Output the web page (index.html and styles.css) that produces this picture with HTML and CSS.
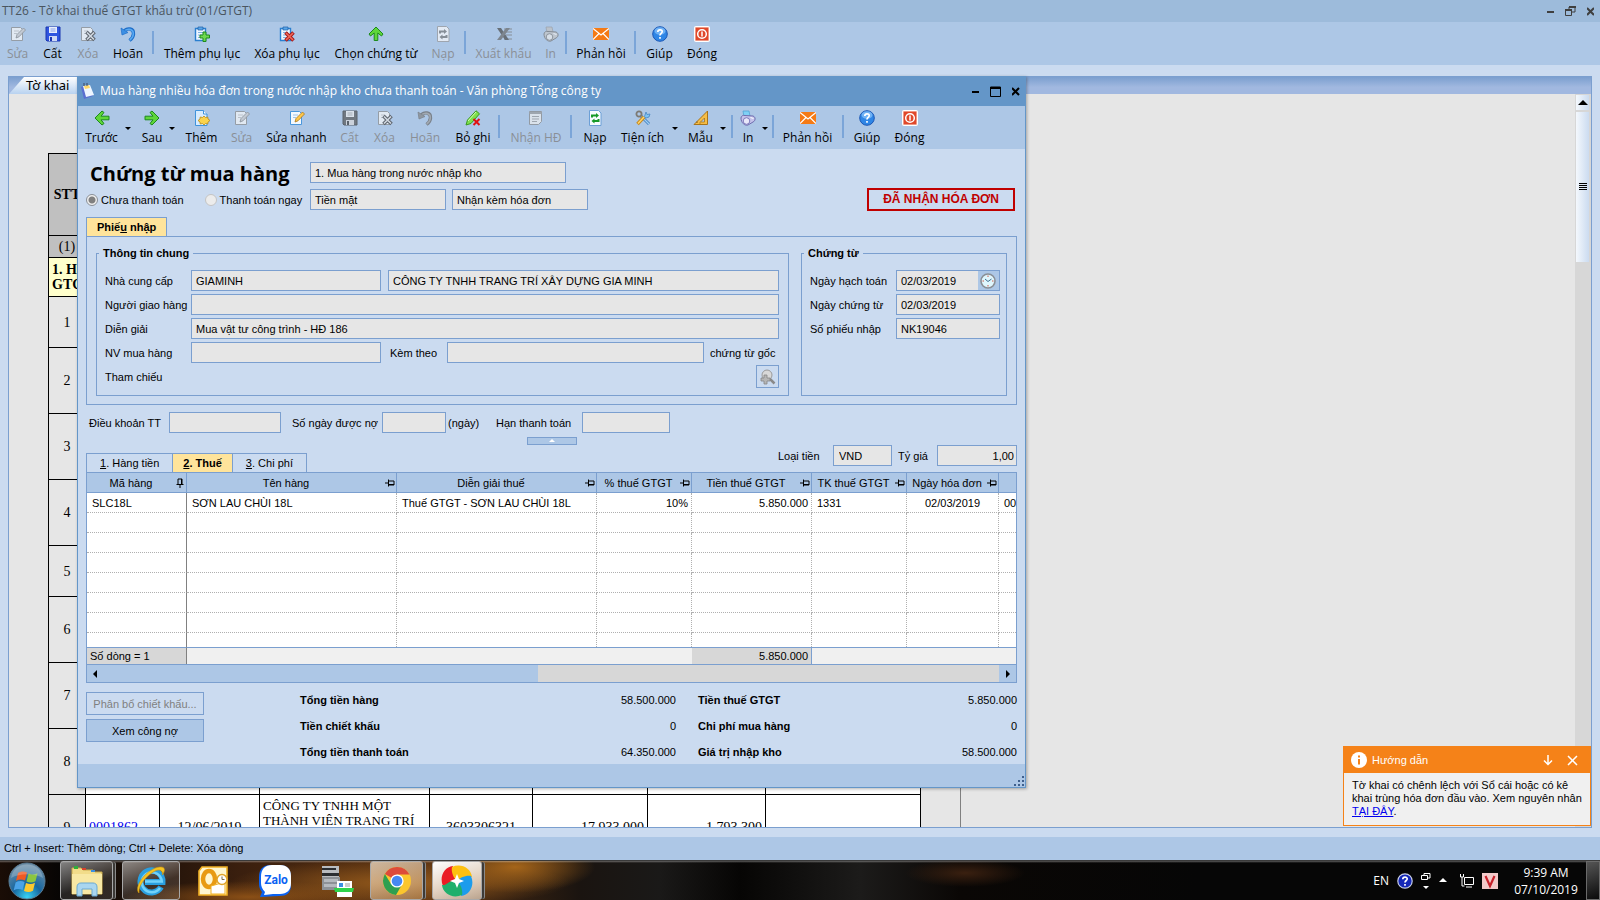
FILE: index.html
```html
<!DOCTYPE html>
<html lang="vi">
<head>
    <meta charset="UTF-8">
    <meta name="viewport" content="width=device-width, initial-scale=1.0">
    <title>TT26 - Tờ khai thuế GTGT khấu trừ (01/GTGT)</title>
    <link rel="stylesheet" href="styles.css">
</head>
<body>
    <!-- Shared icons -->
    <svg class="icon-defs" aria-hidden="true">
        <symbol id="i-edit" viewBox="0 0 16 16"><path d="M1.500 1.500h9l2 2v11h-11z" fill="#f4f9ff" stroke="#4a97dc"/><path d="M4 5h5M4 7.500h3" stroke="#9fc4ea"/><path d="M6 12l1-3.500L13.500 2l2 2L9 10.800z" fill="#ffc84a" stroke="#a9761b" stroke-width=".8"/></symbol>
        <symbol id="i-save" viewBox="0 0 16 16"><path d="M1 1h14v14H2l-1-1z" fill="#2f55e0" stroke="#1b36b0"/><path d="M4 1h8v6H4z" fill="#e8eefc"/><path d="M5.500 3h5M5.500 5h5" stroke="#8ba0e8"/><path d="M4 10h8v5H4z" fill="#cfd8f5"/><path d="M5 11h2v4H5z" fill="#1b36b0"/></symbol>
        <symbol id="i-delete" viewBox="0 0 16 16"><path d="M1.500 1.500h9l2 2v11h-11z" fill="#f4f9ff" stroke="#4a97dc"/><path d="M4 5h4M4 7.500h3" stroke="#9fc4ea"/><path d="M6.500 6l8 8M14.500 6l-8 8" stroke="#8c2020" stroke-width="3.600"/><path d="M7 6.500l7 7M14 6.500l-7 7" stroke="#e2e2e2" stroke-width="1.600"/></symbol>
        <symbol id="i-undo" viewBox="0 0 16 16"><path d="M4 5.500C7 1.500 14 2 13.500 8c-.2 3-2 5-4 6.500" fill="none" stroke="#1f6fc9" stroke-width="3.400"/><path d="M4 5.500C7 2 13.500 2.500 13.300 8c-.2 3-2 5-3.600 6" fill="none" stroke="#58a9f2" stroke-width="1.600"/><path d="M1 2l1 7 6-2.500z" fill="#3c8fe4" stroke="#1f6fc9" stroke-width=".7"/></symbol>
        <symbol id="i-clip-add" viewBox="0 0 16 16"><path d="M1.500 2.500h10v12h-10z" fill="#eef6ff" stroke="#2a7fd0" stroke-width="1.400"/><path d="M4 1h5v3H4z" fill="#5ba6e8" stroke="#1c5fa8" stroke-width=".7"/><path d="M4 6.500h5M4 9h4M4 11.500h3" stroke="#7fb2e2"/><path d="M9 6h3v3h3.500v3H12v3.500H9V12H6V9h3z" fill="#6fd84f" stroke="#1d8a1d"/></symbol>
        <symbol id="i-clip-del" viewBox="0 0 16 16"><path d="M1.500 2.500h10v12h-10z" fill="#eef6ff" stroke="#2a7fd0" stroke-width="1.400"/><path d="M4 1h5v3H4z" fill="#5ba6e8" stroke="#1c5fa8" stroke-width=".7"/><path d="M4 6.500h5M4 9h4M4 11.500h3" stroke="#7fb2e2"/><path d="M6.500 6.500l8 8M14.500 6.500l-8 8" stroke="#a81818" stroke-width="3.600"/><path d="M7 7l7 7M14 7l-7 7" stroke="#f06a5a" stroke-width="1.600"/></symbol>
        <symbol id="i-up" viewBox="0 0 16 16"><path d="M8 1L15 8l-1.500 2L9.800 7v7.500H6.200V7L2.500 10 1 8z" fill="#5fd63a" stroke="#1c8a1c"/></symbol>
        <symbol id="i-left" viewBox="0 0 16 16"><path d="M1 8l7-7 2 1.500L7 6.200h8v3.600H7l3 3.700L8 15z" fill="#5fd63a" stroke="#1c8a1c"/></symbol>
        <symbol id="i-right" viewBox="0 0 16 16"><path d="M15 8L8 1 6 2.500l3 3.700H1v3.600h8l-3 3.700L8 15z" fill="#5fd63a" stroke="#1c8a1c"/></symbol>
        <symbol id="i-reload" viewBox="0 0 16 16"><path d="M2.500.500h9l2.500 2.500v12.500H2.500z" fill="#f6fbff" stroke="#6c9fd6"/><path d="M5 7.500V5.500h4.500" fill="none" stroke="#169a28" stroke-width="2"/><path d="M9 3l3 2.500L9 8z" fill="#169a28"/><path d="M11.500 9v2H7" fill="none" stroke="#169a28" stroke-width="2"/><path d="M7.500 8.500L4.500 11l3 2.500z" fill="#169a28"/></symbol>
        <symbol id="i-excel" viewBox="0 0 16 16"><path d="M8 3h8M10 6h6M10 9h6M8 13h8" stroke="#777"/><path d="M1 2h4l8 12H9z" fill="#4a4a4a"/><path d="M10 2h4L5 14H1z" fill="#6a6a6a"/></symbol>
        <symbol id="i-print" viewBox="0 0 16 16"><path d="M3 1l6 0 1 5-6 1z" fill="#7fd0f5" stroke="#4b9fd0" stroke-width=".7"/><path d="M1 8c0-2 2-3 4-2.500L13 6c3 1 2.500 5 0 6l-5 3c-3 1-7-2-7-7z" fill="#c5c3ea" stroke="#6f6cae"/><circle cx="6.500" cy="11" r="3.300" fill="#e9e8fa" stroke="#7c79bb"/><path d="M10.500 7.500l3 1" stroke="#fff"/></symbol>
        <symbol id="i-mail" viewBox="0 0 16 16"><path d="M0 2h16v12H0z" fill="#f57a14"/><path d="M0 2.500L8 9l8-6.500M0 13.500L6 7.500M16 13.500l-6-6" fill="none" stroke="#fff" stroke-width="1.200"/></symbol>
        <symbol id="i-help" viewBox="0 0 16 16"><circle cx="8" cy="8" r="7.300" fill="#2f86e6" stroke="#1b57b5"/><ellipse cx="8" cy="5" rx="5.500" ry="3.800" fill="#8cc4fb" opacity=".7"/><path d="M5.800 6c0-3 4.600-2.800 4.400-.3C10.100 7.300 8 7.400 8 9.500M8 11v1.800" fill="none" stroke="#fff" stroke-width="1.700"/></symbol>
        <symbol id="i-power" viewBox="0 0 16 16"><rect x=".500" y=".500" width="15" height="15" rx="1" fill="#fbe6e0" stroke="#fff"/><path d="M1.500 1.500h13v13h-13z" fill="#e0482a"/><circle cx="8" cy="8" r="4.300" fill="none" stroke="#fff" stroke-width="1.500"/><path d="M8 5.500v5" stroke="#fff" stroke-width="1.500"/></symbol>
        <symbol id="i-new" viewBox="0 0 16 16"><path d="M1.500.500h8l3.500 3.500v11.500H1.500z" fill="#d8ecfd" stroke="#3f93dc"/><path d="M9.500.500V4H13" fill="#fff" stroke="#3f93dc"/><path d="M10 6l1.500 1.500 2.300-.500.200 2 2 1.500-2 1.500-.200 2-2.300-.500L10 15l-1.500-1.500-2.300.500-.200-2-2-1.500 2-1.500.200-2 2.300.500z" fill="#fbd34a" stroke="#b98a18" stroke-width=".8"/></symbol>
        <symbol id="i-unpost" viewBox="0 0 16 16"><path d="M1 15l1.500-5L11 .800l3.500 3L6 13.500z" fill="#7ee04c" stroke="#3a9a1c"/><path d="M3 11l8-9" stroke="#d5f9b8"/><path d="M8.500 9l6 6M14.500 9l-6 6" stroke="#e01010" stroke-width="2"/></symbol>
        <symbol id="i-receive" viewBox="0 0 16 16"><path d="M1.500 1.500h12v10l-3 3h-9z" fill="#eee" stroke="#888"/><path d="M1.500 3h12" stroke="#999" stroke-width="2"/><path d="M4 6.500h7M4 9h7M4 11.500h5" stroke="#999"/></symbol>
        <symbol id="i-tools" viewBox="0 0 16 16"><path d="M6 6l8 8" stroke="#3f7fc0" stroke-width="3"/><path d="M6 6l8 8" stroke="#9fd0f4" stroke-width="1.200"/><circle cx="4" cy="4" r="2.600" fill="none" stroke="#7d7a74" stroke-width="1.800"/><path d="M9 7L2.500 14" stroke="#c98a1d" stroke-width="3.400"/><path d="M9 7l-6 6.500" stroke="#ffd76a" stroke-width="1.400"/><path d="M9.500 6.500L11 2l1 2.500 3-.500-1 3-3 1z" fill="#7fc3f2" stroke="#3f7fc0" stroke-width=".7"/></symbol>
        <symbol id="i-ruler" viewBox="0 0 16 16"><path d="M14.500 1v13.500H1z" fill="#f6bd45" stroke="#a8741a"/><path d="M11.500 8v4h-4z" fill="#acc8e8" stroke="#a8741a" stroke-width=".8"/><path d="M4 13v-1.500M7 13.500v-1" stroke="#7c5510"/></symbol>
        <symbol id="i-pin" viewBox="0 0 10 10"><path d="M0 5h3M3.500 1.500v7M4 3h5v4H4M4 6.500h5" fill="none" stroke="#000"/></symbol>
    </svg>

    <div class="app">
        <header class="titlebar">
            <h1>TT26 - Tờ khai thuế GTGT khấu trừ (01/GTGT)</h1>
            <div class="window-buttons">
                <button aria-label="Minimize"><svg width="7" height="11"><path d="M0 6h7" stroke="#3f3f3f" stroke-width="2"/></svg></button>
                <button aria-label="Restore"><svg width="11" height="11"><path d="M4 3V1h6v5H7M.5 4h6v5.500h-6z" fill="none" stroke="#3f3f3f"/><path d="M4 1h7M0 4h7" stroke="#3f3f3f" stroke-width="2"/></svg></button>
                <button aria-label="Close"><svg width="7" height="11"><path d="M0 2l7 7M7 2L0 9" stroke="#3f3f3f" stroke-width="2"/></svg></button>
            </div>
        </header>

        <nav class="toolbar main-toolbar">
            <button disabled><svg><use href="#i-edit"/></svg>Sửa</button>
            <button><svg><use href="#i-save"/></svg>Cất</button>
            <button disabled><svg><use href="#i-delete"/></svg>Xóa</button>
            <button><svg><use href="#i-undo"/></svg>Hoãn</button>
            <span class="sep"></span>
            <button><svg><use href="#i-clip-add"/></svg>Thêm phụ lục</button>
            <button><svg><use href="#i-clip-del"/></svg>Xóa phụ lục</button>
            <button><svg><use href="#i-up"/></svg>Chọn chứng từ</button>
            <button disabled><svg><use href="#i-reload"/></svg>Nạp</button>
            <span class="sep"></span>
            <button disabled><svg><use href="#i-excel"/></svg>Xuất khẩu</button>
            <button disabled><svg><use href="#i-print"/></svg>In</button>
            <span class="sep"></span>
            <button><svg><use href="#i-mail"/></svg>Phản hồi</button>
            <span class="sep"></span>
            <button><svg><use href="#i-help"/></svg>Giúp</button>
            <button><svg><use href="#i-power"/></svg>Đóng</button>
        </nav>

        <main class="workspace">
            <section class="sheet-panel">
                <div class="sheet-tabs"><span class="sheet-tab">Tờ khai</span></div>
                <div class="sheet-body">
                    <div class="sheet-scroll">
                        <table class="sheet">
                            <colgroup><col class="s1"><col class="s2"><col class="s3"><col class="s4"><col class="s5"><col class="s6"><col class="s7"><col class="s8"></colgroup>
                            <tr class="head"><th>STT</th><th colspan="7"></th></tr>
                            <tr class="nums"><td>(1)</td><td></td><td></td><td></td><td></td><td></td><td></td><td></td></tr>
                            <tr class="group"><td colspan="8">1. Hàng hóa, dịch vụ dùng riêng cho SXKD chịu thuế<br>GTGT đủ điều kiện khấu trừ</td></tr>
                            <tr class="short"><td>1</td><td></td><td></td><td></td><td></td><td></td><td></td><td></td></tr>
                            <tr><td>2</td><td></td><td></td><td></td><td></td><td></td><td></td><td></td></tr>
                            <tr><td>3</td><td></td><td></td><td></td><td></td><td></td><td></td><td></td></tr>
                            <tr><td>4</td><td></td><td></td><td></td><td></td><td></td><td></td><td></td></tr>
                            <tr class="short"><td>5</td><td></td><td></td><td></td><td></td><td></td><td></td><td></td></tr>
                            <tr><td>6</td><td></td><td></td><td></td><td></td><td></td><td></td><td></td></tr>
                            <tr><td>7</td><td></td><td></td><td></td><td></td><td></td><td></td><td></td></tr>
                            <tr><td>8</td><td></td><td></td><td class="name last-line">BÌNH</td><td></td><td></td><td></td><td></td></tr>
                            <tr><td>9</td><td class="link">0001862</td><td class="mid">12/06/2019</td><td class="name">CÔNG TY TNHH MỘT THÀNH VIÊN TRANG TRÍ<br>NỘI THẤT<br>GIA MINH</td><td class="mid">3603306321</td><td class="num">17.933.000</td><td class="num">1.793.300</td><td></td></tr>
                        </table>
                        <div class="page-edge"></div>
                    </div>
                    <div class="scroll-y">
                        <button aria-label="Lên"><svg width="10" height="6"><path d="M5 0l5 5H0z"/></svg></button>
                        <div class="thumb"><svg width="8" height="8"><path d="M0 .5h8M0 2.500h8M0 4.500h8M0 6.500h8" stroke="#000"/></svg></div>
                    </div>
                </div>
            </section>

            <section class="dialog">
                <header class="dialog-title">
                    <svg width="14" height="16" viewBox="0 0 14 16"><path d="M0 4l8-2 4 11-9 3z" fill="#5a6fd0"/><path d="M2 3l7-1 4 10-8 2z" fill="#eef6ff"/><path d="M3 3l5-1 1 3-5 1z" fill="#ffd86a"/><path d="M3 0v3M6 0v3" stroke="#3c4660"/></svg>
                    <h2>Mua hàng nhiều hóa đơn trong nước nhập kho chưa thanh toán - Văn phòng Tổng công ty</h2>
                    <div class="window-buttons">
                        <button aria-label="Minimize"><svg width="7" height="11"><path d="M0 6h7" stroke="#000" stroke-width="2"/></svg></button>
                        <button aria-label="Maximize"><svg width="11" height="11"><path d="M.5 1h10v9.500H.5z" fill="none" stroke="#000"/><path d="M0 2h11" stroke="#000" stroke-width="2"/></svg></button>
                        <button aria-label="Close"><svg width="8" height="11"><path d="M0 2l7 7M7 2L0 9" stroke="#000" stroke-width="2"/></svg></button>
                    </div>
                </header>

                <nav class="toolbar dialog-toolbar">
                    <button><svg><use href="#i-left"/></svg>Trước</button>
                    <span class="caret"></span>
                    <button><svg><use href="#i-right"/></svg>Sau</button>
                    <span class="caret"></span>
                    <button><svg><use href="#i-new"/></svg>Thêm</button>
                    <button disabled><svg><use href="#i-edit"/></svg>Sửa</button>
                    <button><svg><use href="#i-edit"/></svg>Sửa nhanh</button>
                    <button disabled><svg><use href="#i-save"/></svg>Cất</button>
                    <button disabled><svg><use href="#i-delete"/></svg>Xóa</button>
                    <button disabled><svg><use href="#i-undo"/></svg>Hoãn</button>
                    <button><svg><use href="#i-unpost"/></svg>Bỏ ghi</button>
                    <span class="sep"></span>
                    <button disabled><svg><use href="#i-receive"/></svg>Nhận HĐ</button>
                    <span class="sep"></span>
                    <button><svg><use href="#i-reload"/></svg>Nạp</button>
                    <button><svg><use href="#i-tools"/></svg>Tiện ích</button>
                    <span class="caret"></span>
                    <button><svg><use href="#i-ruler"/></svg>Mẫu</button>
                    <span class="caret"></span>
                    <span class="sep"></span>
                    <button><svg><use href="#i-print"/></svg>In</button>
                    <span class="caret"></span>
                    <span class="sep"></span>
                    <button><svg><use href="#i-mail"/></svg>Phản hồi</button>
                    <span class="sep"></span>
                    <button><svg><use href="#i-help"/></svg>Giúp</button>
                    <button><svg><use href="#i-power"/></svg>Đóng</button>
                </nav>

                <div class="dialog-body">
                    <div class="doc-head">
                        <h3>Chứng từ mua hàng</h3>
                        <input class="doc-type" type="text" aria-label="Loại chứng từ" value="1. Mua hàng trong nước nhập kho" readonly>
                    </div>
                    <div class="pay-row">
                        <div class="pay-options">
                            <label><input type="radio" name="pay" checked>Chưa thanh toán</label>
                            <label><input type="radio" name="pay" class="off">Thanh toán ngay</label>
                        </div>
                        <input type="text" aria-label="Hình thức" value="Tiền mặt" readonly>
                        <input type="text" aria-label="Hóa đơn" value="Nhận kèm hóa đơn" readonly>
                        <strong class="stamp">ĐÃ NHẬN HÓA ĐƠN</strong>
                    </div>

                    <button class="tab active voucher-tab">Phiế<u>u</u> nhập</button>
                    <div class="voucher">
                        <fieldset class="general">
                            <legend>Thông tin chung</legend>
                            <div class="field">
                                <label for="supplier">Nhà cung cấp</label>
                                <input id="supplier" class="code" type="text" value="GIAMINH" readonly>
                                <input class="grow" type="text" aria-label="Tên nhà cung cấp" value="CÔNG TY TNHH TRANG TRÍ XÂY DỰNG GIA MINH" readonly>
                            </div>
                            <div class="field">
                                <label for="deliver">Người giao hàng</label>
                                <input id="deliver" class="grow" type="text" readonly>
                            </div>
                            <div class="field">
                                <label for="note">Diễn giải</label>
                                <input id="note" class="grow" type="text" value="Mua vật tư công trình - HĐ 186" readonly>
                            </div>
                            <div class="field">
                                <label for="staff">NV mua hàng</label>
                                <input id="staff" class="code" type="text" readonly>
                                <label for="attach" class="attach">Kèm theo</label>
                                <input id="attach" class="grow" type="text" readonly>
                                <span class="origin">chứng từ gốc</span>
                            </div>
                            <div class="field ref">
                                <span>Tham chiếu</span>
                                <button class="lookup" aria-label="Tìm tham chiếu"><svg width="16" height="16" viewBox="0 0 16 16"><circle cx="7" cy="6" r="5" fill="#d8d8d8" stroke="#9a9a9a"/><path d="M10 10l4.500 4.500" stroke="#8a8a8a" stroke-width="2.500"/><path d="M4 6h3v3h3v3H7v3H4v-3H1V9h3z" fill="#b5b5b5" stroke="#858585" stroke-width=".8"/></svg></button>
                            </div>
                        </fieldset>
                        <fieldset class="voucher-info">
                            <legend>Chứng từ</legend>
                            <div class="field">
                                <label for="post-date">Ngày hạch toán</label>
                                <div class="date-box">
                                    <input id="post-date" type="text" value="02/03/2019" readonly>
                                    <button aria-label="Chọn giờ"><svg width="16" height="16" viewBox="0 0 16 16"><circle cx="8" cy="8" r="7" fill="#dff6fd" stroke="#8a8f95" stroke-width="1.600"/><path d="M5 6l3 2.500L11.500 6" fill="none" stroke="#3f6f90"/><path d="M8 2.500v1.500M8 12v1.500M2.500 8H4M12 8h1.500" stroke="#d05a4a"/></svg></button>
                                </div>
                            </div>
                            <div class="field">
                                <label for="doc-date">Ngày chứng từ</label>
                                <input id="doc-date" class="grow" type="text" value="02/03/2019" readonly>
                            </div>
                            <div class="field">
                                <label for="doc-no">Số phiếu nhập</label>
                                <input id="doc-no" class="grow" type="text" value="NK19046" readonly>
                            </div>
                        </fieldset>
                    </div>

                    <div class="terms">
                        <label for="term">Điều khoản TT</label>
                        <input id="term" type="text" readonly>
                        <label for="days">Số ngày được nợ</label>
                        <input id="days" type="text" readonly>
                        <span>(ngày)</span>
                        <label for="due">Hạn thanh toán</label>
                        <input id="due" type="text" readonly>
                    </div>
                    <button class="collapse" aria-label="Thu gọn"><svg width="6" height="4"><path d="M3 0l3 3H0z" fill="#fff"/></svg></button>

                    <div class="detail-bar">
                        <div class="detail-tabs">
                            <button class="tab"><u>1</u>. Hàng tiền</button>
                            <button class="tab active"><u>2</u>. Thuế</button>
                            <button class="tab"><u>3</u>. Chi phí</button>
                        </div>
                        <div class="currency">
                            <label for="currency">Loại tiền</label>
                            <input id="currency" type="text" value="VND" readonly>
                            <label for="rate">Tỷ giá</label>
                            <input id="rate" class="num" type="text" value="1,00" readonly>
                        </div>
                    </div>

                    <div class="grid">
                        <table>
                            <colgroup><col class="c1"><col class="c2"><col class="c3"><col class="c4"><col class="c5"><col class="c6"><col class="c7"><col></colgroup>
                            <thead>
                                <tr>
                                    <th><div><span>Mã hàng</span><svg class="pinned"><use href="#i-pin"/></svg></div></th>
                                    <th><div><span>Tên hàng</span><svg><use href="#i-pin"/></svg></div></th>
                                    <th><div><span>Diễn giải thuế</span><svg><use href="#i-pin"/></svg></div></th>
                                    <th><div><span>% thuế GTGT</span><svg><use href="#i-pin"/></svg></div></th>
                                    <th><div><span>Tiền thuế GTGT</span><svg><use href="#i-pin"/></svg></div></th>
                                    <th><div><span>TK thuế GTGT</span><svg><use href="#i-pin"/></svg></div></th>
                                    <th><div><span>Ngày hóa đơn</span><svg><use href="#i-pin"/></svg></div></th>
                                    <th></th>
                                </tr>
                            </thead>
                            <tbody>
                                <tr><td>SLC18L</td><td>SƠN LAU CHÙI 18L</td><td>Thuế GTGT - SƠN LAU CHÙI 18L</td><td class="num">10%</td><td class="num">5.850.000</td><td>1331</td><td class="mid">02/03/2019</td><td>00</td></tr>
                                <tr><td></td><td></td><td></td><td></td><td></td><td></td><td></td><td></td></tr>
                                <tr><td></td><td></td><td></td><td></td><td></td><td></td><td></td><td></td></tr>
                                <tr><td></td><td></td><td></td><td></td><td></td><td></td><td></td><td></td></tr>
                                <tr><td></td><td></td><td></td><td></td><td></td><td></td><td></td><td></td></tr>
                                <tr><td></td><td></td><td></td><td></td><td></td><td></td><td></td><td></td></tr>
                                <tr><td></td><td></td><td></td><td></td><td></td><td></td><td></td><td></td></tr>
                                <tr class="cut"><td></td><td></td><td></td><td></td><td></td><td></td><td></td><td></td></tr>
                            </tbody>
                            <tfoot>
                                <tr><td class="total count">Số dòng = 1</td><td colspan="3"></td><td class="total num">5.850.000</td><td colspan="3"></td></tr>
                            </tfoot>
                        </table>
                        <div class="scroll-x">
                            <button class="thumb" aria-label="Trái"><svg width="4" height="8"><path d="M4 0v8L0 4z"/></svg></button>
                            <button aria-label="Phải"><svg width="4" height="8"><path d="M0 0v8l4-4z"/></svg></button>
                        </div>
                    </div>

                    <div class="summary">
                        <div class="actions">
                            <button disabled>Phân bổ chiết khấu...</button>
                            <button>Xem công nợ</button>
                        </div>
                        <dl class="totals">
                            <dt>Tổng tiền hàng</dt><dd>58.500.000</dd>
                            <dt>Tiền thuế GTGT</dt><dd>5.850.000</dd>
                            <dt>Tiền chiết khấu</dt><dd>0</dd>
                            <dt>Chi phí mua hàng</dt><dd>0</dd>
                            <dt>Tổng tiền thanh toán</dt><dd>64.350.000</dd>
                            <dt>Giá trị nhập kho</dt><dd>58.500.000</dd>
                        </dl>
                    </div>
                </div>
                <footer class="dialog-foot">
                    <svg width="10" height="10"><path d="M8 0h2v2H8zM4 4h2v2H4zM8 4h2v2H8zM0 8h2v2H0zM4 8h2v2H4zM8 8h2v2H8z" fill="#3f5f8c"/></svg>
                </footer>
            </section>

            <aside class="notice">
                <header>
                    <svg width="16" height="16" viewBox="0 0 16 16"><circle cx="8" cy="8" r="8" fill="#fff"/><path d="M7 3.500h2v2H7zM7 7h2v5.500H7z" fill="#f58218"/></svg>
                    <h4>Hướng dẫn</h4>
                    <button aria-label="Thu nhỏ"><svg width="10" height="11"><path d="M5 0v9M1 5.500l4 4 4-4" fill="none" stroke="#fff" stroke-width="1.500"/></svg></button>
                    <button aria-label="Đóng"><svg width="11" height="11"><path d="M1 1l9 9M10 1l-9 9" stroke="#fff" stroke-width="1.500"/></svg></button>
                </header>
                <p>Tờ khai có chênh lệch với Sổ cái hoặc có kê khai trùng hóa đơn đầu vào. Xem nguyên nhân <a href="#">TẠI ĐÂY</a>.</p>
            </aside>
        </main>

        <div class="statusbar">Ctrl + Insert: Thêm dòng; Ctrl + Delete: Xóa dòng</div>

        <footer class="taskbar">
            <button class="start" aria-label="Start">
                <svg width="38" height="38" viewBox="0 0 38 38">
                    <defs><radialGradient id="orb" cx=".5" cy=".95" r=".9"><stop offset="0" stop-color="#39d4f5"/><stop offset=".45" stop-color="#17669f"/><stop offset="1" stop-color="#6d8fa8"/></radialGradient></defs>
                    <circle cx="19" cy="19" r="18" fill="url(#orb)" stroke="#5b7c93"/>
                    <path d="M10 11c3-2 6-2 9-.500l-2 8c-3-1.500-6-1.500-9 .300z" fill="#ee5a24"/>
                    <path d="M20.500 11.500c3 1.500 6 1.500 9-.200l-2 8c-3 1.700-6 1.600-9 .200z" fill="#8cc63f"/>
                    <path d="M7.600 20.500c3-1.800 6-1.800 9-.400l-2 8c-3-1.500-6-1.500-9 .400z" fill="#4aa3e8"/>
                    <path d="M18 21c3 1.500 6 1.500 9-.200l-2 8c-3 1.600-6 1.600-9 .200z" fill="#fdc92e"/>
                    <path d="M3 16C5 6 12 2.500 19 2.500S33 6 35 16C26 11 12 11 3 16z" fill="#fff" opacity=".22"/>
                </svg>
            </button>
            <button class="task open stacked" aria-label="Explorer">
                <svg width="34" height="32" viewBox="0 0 34 32"><path d="M2 3h9l2 2h10l2 2h7v22H2z" fill="#f2dc8a" stroke="#c9a94c"/><path d="M2 9h30v20H2z" fill="#f8e8a4"/><path d="M4 1h4v3H4z" fill="#2fae3c"/><path d="M12 3h4v2h-4z" fill="#d8402c"/><path d="M21 5h4v2h-4z" fill="#3c8fe0"/><path d="M7 31v-9c0-3 2-4 4-4h12c2 0 4 1 4 4v9h-5v-7H12v7z" fill="#a9d6f0" stroke="#6aa9d2"/></svg>
            </button>
            <button class="task open" aria-label="Internet Explorer">
                <svg width="32" height="32" viewBox="0 0 32 32"><path d="M26 22a11 11 0 1 1 1.500-5H10" fill="none" stroke="#2a9fe0" stroke-width="6"/><path d="M25 23a10 10 0 1 1 1.800-6.500H10" fill="none" stroke="#72d2fa" stroke-width="2.500"/><path d="M4 28C-2 22 12 3 25 2c6-.500 5 4 2.500 8C28 5 24 4 20 6 12 10 3 20 4 28z" fill="#f5c323" stroke="#c8900e" stroke-width=".6"/></svg>
            </button>
            <button class="task" aria-label="Outlook">
                <svg width="30" height="30" viewBox="0 0 30 30"><path d="M4 1h25v28H1V5z" fill="#fff6d0" stroke="#f1b124" stroke-width="1.600"/><ellipse cx="11" cy="13" rx="6" ry="8" fill="none" stroke="#e89a13" stroke-width="4.500"/><path d="M13 20l14-4v12H13z" fill="#fff" stroke="#f1b124"/><circle cx="24" cy="13.500" r="5" fill="#fff" stroke="#e0a42a" stroke-width="1.500"/><path d="M24 10.500v3h2.500" fill="none" stroke="#7a6a4a"/></svg>
            </button>
            <button class="task" aria-label="Zalo">
                <svg width="32" height="32" viewBox="0 0 32 32"><path d="M12 0h8c8 0 12 4 12 12v8c0 8-4 11-12 11L1 32l2-5c-2-3-3-4-3-9v-6C0 4 4 0 12 0z" fill="#0a62f2"/><path d="M13 0h8c7 0 11 4 11 11v7c0 7-4 11-11 11h-7c-3 0-5 1-9 1l1-3c-3-3-4-6-4-9v-6C2 4 6 0 13 0z" fill="#fff"/><text x="17" y="19" font-size="12" class="zalo-text" text-anchor="middle">Zalo</text></svg>
            </button>
            <button class="task" aria-label="Scanner">
                <svg width="34" height="32" viewBox="0 0 34 32"><path d="M2 1h17v11H2z" fill="#b9bcc0"/><path d="M2 3h14v2H2zM2 8h17v3H2z" fill="#2a2d31"/><path d="M2 12h18v13H2z" fill="#8d9196"/><path d="M4 14h14v3H4zM4 19h14v3H4z" fill="#b5b9be"/><path d="M17 16h15v9H17z" fill="#fff"/><path d="M19 18h4v4h-4z" fill="#3c8fe0"/><path d="M25 19h5M25 21h5" stroke="#999"/><path d="M14 23h20l-1 4H15z" fill="#2fd44a"/><path d="M17 27h15v5H17z" fill="#fff"/></svg>
            </button>
            <button class="task open stacked warm" aria-label="Chrome">
                <svg width="30" height="30" viewBox="0 0 30 30"><circle cx="15" cy="15" r="14" fill="#fbc62d"/><path d="M15 15L2.900 8A14 14 0 0 1 27.500 8.500H15z" fill="#dd4b3a"/><path d="M2.900 8A14 14 0 0 0 14 29l6-10.500-5-3.500-6 3z" fill="#2f9f50"/><circle cx="15" cy="15" r="6.600" fill="#fff"/><circle cx="15" cy="15" r="5.300" fill="#4688f1"/></svg>
            </button>
            <button class="task open stacked bright" aria-label="MISA">
                <svg width="32" height="32" viewBox="0 0 32 32"><circle cx="16" cy="16" r="12" fill="#fff"/><path d="M16 15c-2 5-10 7-14 6C-2 12 3 2 12 1c-1 5 6 7 4 14z" fill="#ea1c24"/><path d="M17 16c-5-2-7-10-6-14C20-2 30 3 31 12c-5-1-7 6-14 4z" fill="#fdc010"/><path d="M16 17c2-5 10-7 14-6 4 9-1 19-10 20 1-5-6-7-4-14z" fill="#1c9cec"/><path d="M15 16c5 2 7 10 6 14C12 34 2 29 1 20c5 1 7-6 14-4z" fill="#1faf6c"/><path d="M16 9l2 5 5 2-5 2-2 5-2-5-5-2 5-2z" fill="#fff"/></svg>
            </button>
            <div class="tray">
                <span>EN</span>
                <svg width="16" height="16" viewBox="0 0 16 16"><circle cx="8" cy="8" r="7.200" fill="#1528b8" stroke="#c8cfe8" stroke-width="1.200"/><path d="M5.800 6.300c0-3 4.600-2.800 4.400-.300C10.100 7.500 8 7.600 8 9.500M8 11v1.700" fill="none" stroke="#fff" stroke-width="1.700"/></svg>
                <svg width="10" height="18"><path d="M3 3V1.500h6V6H7M.500 3.500h6v4h-6z" fill="none" stroke="#fff"/><path d="M2 14h6l-3 3z" fill="#fff"/></svg>
                <svg class="up" width="8" height="5"><path d="M4 0l4 4H0z" fill="#fff"/></svg>
                <svg class="net" width="15" height="14"><path d="M5.500 3.500h9v7h-9zM7 13h6M1.500 0v3h3V0M3 3v9h2.500" fill="none" stroke="#fff"/></svg>
                <svg width="16" height="16"><path d="M0 0h16v16H0z" fill="#f3c9c9"/><path d="M3.500 3L8 13l4.500-10" fill="none" stroke="#c8202a" stroke-width="2.200"/></svg>
                <time>9:39 AM<br>07/10/2019</time>
            </div>
            <button class="show-desktop" aria-label="Show desktop"></button>
        </footer>
    </div>
</body>
</html>
```
FILE: styles.css
```css
* { box-sizing: border-box; }
body {
    margin: 0;
    font-family: "Liberation Sans", Arial, sans-serif;
    font-size: 11px;
    line-height: 16px;
    color: #000;
    overflow: hidden;
}
button {
    font: inherit;
    color: inherit;
    border: none;
    background: none;
    padding: 0;
    cursor: pointer;
}
input[type="text"] {
    font: inherit;
    color: #000;
    height: 21px;
    padding: 0 4px;
    min-width: 0;
    border: 1px solid #7b9fcf;
    border-radius: 0;
    background-color: #e6e6e6;
}
svg { display: block; flex: none; }
.icon-defs { position: absolute; width: 0; height: 0; }
.grow { flex: 1; }
.num { text-align: right; }

.app {
    display: flex;
    flex-direction: column;
    height: 100vh;
    background-color: #cbdbf0;
}

/* --- Title bars --- */
.titlebar {
    display: flex;
    align-items: center;
    justify-content: space-between;
    height: 22px;
    padding: 0 6px 0 2px;
    background-color: #9dbbdb;
}
.titlebar h1, .dialog-title h2 {
    margin: 0;
    font-family: "Open Sans", "Noto Sans", sans-serif;
    font-size: 12px;
    font-weight: normal;
}
.titlebar h1 { color: #4a5560; }
.window-buttons { display: flex; gap: 11px; }

/* --- Toolbars --- */
.toolbar {
    display: grid;
    justify-content: start;
    background-color: #adc7e6;
    font-family: "Open Sans", "Noto Sans", sans-serif;
    font-size: 12px;
    padding-top: 4px;
}
.toolbar button {
    display: flex;
    flex-direction: column;
    align-items: center;
    gap: 4px;
    white-space: nowrap;
}
.toolbar svg { width: 16px; height: 16px; }
.toolbar button:disabled { color: #8a8f96; }
.toolbar button:disabled svg { filter: grayscale(1); opacity: 0.7; }
.sep {
    width: 2px;
    height: 23px;
    margin: 5px 0 0 2px;
    background-color: #7ba5d8;
}
.caret {
    margin-top: 17px;
    width: 0;
    height: 0;
    border: 3px solid transparent;
    border-top-color: #000;
    border-bottom: none;
}
.main-toolbar {
    height: 43px;
    grid-template-columns: 35px 35px 36px 44px 8px 88px 82px 96px 38px 7px 69px 25px 7px 62px 7px 41px 44px;
}
.dialog-toolbar {
    height: 43px;
    grid-template-columns: 47px 10px 34px 14px 37px 43px 67px 39px 31px 50px 46px 8px 64px 9px 36px 59px 9px 39px 9px 5px 28px 8px 5px 65px 7px 40px 45px;
}

/* --- Declaration sheet --- */
.workspace {
    position: relative;
    flex: 1;
    min-height: 0;
    padding: 11px 8px 9px;
}
.sheet-panel {
    display: flex;
    flex-direction: column;
    height: 100%;
    border: 1px solid #7b9fcf;
}
.sheet-tabs {
    height: 17px;
    flex: none;
    background: linear-gradient(#7b9fcf, #a1b8e0 60%);
}
.sheet-tab {
    display: block;
    width: 120px;
    padding-left: 17px;
    font-family: "Noto Sans", sans-serif;
    font-size: 13px;
    line-height: 17px;
    background: linear-gradient(#fff, #b8d2f0);
    clip-path: polygon(15px 0, 100% 0, 100% 100%, 0 100%);
}
.sheet-body {
    display: flex;
    flex: 1;
    min-height: 0;
    background-color: #e6e6e6;
}
.sheet-scroll {
    display: flex;
    flex: 1;
    overflow: hidden;
    padding: 59px 0 0 39px;
}
.sheet {
    flex: none;
    width: 873px;
    height: 708px;
    table-layout: fixed;
    border-collapse: collapse;
    font-family: "Liberation Serif", serif;
    font-size: 14px;
    line-height: 15px;
}
.s1 { width: 37px; }
.s2 { width: 74px; }
.s3 { width: 100px; }
.s4 { width: 170px; }
.s5 { width: 103px; }
.s6 { width: 115px; }
.s7 { width: 118px; }
.sheet td, .sheet th {
    height: 66px;
    padding: 0 3px;
    border: 1px solid #000;
    background-color: #fff;
    overflow: hidden;
}
.sheet td:first-child { background-color: #e6e6e6; text-align: center; }
.sheet .head th { height: 82px; background-color: #c0c0c0; }
.sheet .nums td { height: 22px; background-color: #c0c0c0; }
.sheet .group td { height: 39px; background-color: #ffffcc; font-weight: bold; text-align: left; }
.sheet .short td { height: 51px; }
.sheet .link { color: #0000ee; }
.sheet .mid { text-align: center; }
.sheet .name { font-size: 13px; }
.sheet .last-line { vertical-align: bottom; padding-bottom: 3px; }
.page-edge {
    width: 40px;
    margin-top: -59px;
    border-right: 1px solid #808080;
}
.scroll-y {
    width: 16px;
    padding: 1px;
    background-color: #d7d7d7;
}
.scroll-y button, .scroll-y .thumb {
    display: flex;
    align-items: center;
    justify-content: center;
    width: 13px;
    height: 15px;
    background: linear-gradient(90deg, #f4f8fd, #cbdbf0);
}
.scroll-y .thumb { height: 150px; margin-top: 2px; }

/* --- Purchase voucher window --- */
.dialog {
    position: absolute;
    top: 11px;
    left: 77px;
    width: 949px;
    border: 1px solid #6496c8;
    border-top: none;
    background-color: #cbdbf0;
    box-shadow: 1px 1px 3px rgba(0, 0, 0, 0.3);
}
.dialog-title {
    display: flex;
    align-items: center;
    height: 30px;
    padding: 0 5px 0 3px;
    background-color: #6496c8;
    color: #fff;
}
.dialog-title h2 { flex: 1; margin-left: 5px; }
.dialog-body { padding: 13px 8px 4px; }
.doc-head { display: flex; height: 21px; }
.doc-head h3 {
    width: 224px;
    margin: 0;
    padding-left: 4px;
    font-family: "Open Sans", "Noto Sans", sans-serif;
    font-size: 20px;
    line-height: 24px;
    white-space: nowrap;
}
.doc-type { width: 256px; }
.pay-row { display: flex; align-items: center; gap: 6px; height: 21px; margin-top: 6px; }
.pay-row input[type="text"] { width: 136px; }
.pay-options { display: flex; gap: 21px; width: 218px; align-items: center; }
.pay-options label { display: flex; align-items: center; gap: 3px; white-space: nowrap; }
.pay-options input {
    appearance: none;
    width: 12px;
    height: 12px;
    margin: 0;
    border: 1px solid #8a8f96;
    border-radius: 50%;
    background: radial-gradient(#808080 0 3px, #f0f0f0 4px);
}
.pay-options .off { border-color: #c4c4c4; background: #ececec; }
.stamp {
    margin: 0 2px 0 auto;
    padding: 0 14px;
    border: 2px solid #c00000;
    color: #c00000;
    font-size: 12px;
    line-height: 19px;
}
.tab {
    height: 19px;
    padding: 0 14px;
    border: 1px solid #7b9fcf;
    border-bottom: none;
}
.tab + .tab { border-left: none; }
.tab.active { background-color: #ffe49b; font-weight: bold; }
.voucher-tab { display: block; margin-top: 7px; padding: 0 10px; }
.voucher {
    display: flex;
    gap: 12px;
    padding: 8px 9px;
    border: 1px solid #7b9fcf;
}
fieldset {
    margin: 0;
    padding: 9px 9px 8px 8px;
    border: 1px solid #7b9fcf;
    min-width: 0;
}
legend { padding: 0 4px; margin-left: -6px; font-weight: bold; }
.general { flex: 1; }
.voucher-info { width: 206px; padding-right: 6px; }
.field { display: flex; align-items: center; height: 21px; margin-bottom: 3px; }
.field > label:first-child { width: 86px; white-space: nowrap; }
.field .code { width: 190px; margin-right: 7px; }
.field .attach { width: 59px; padding-left: 2px; }
.field .origin { width: 75px; padding-left: 6px; white-space: nowrap; }
.ref { justify-content: space-between; margin-bottom: 0; }
.lookup {
    display: flex;
    align-items: center;
    justify-content: center;
    width: 23px;
    height: 23px;
    border: 1px solid #7b9fcf;
}
.date-box { display: flex; flex: 1; min-width: 0; }
.date-box input[type="text"] { flex: 1; width: 0; border-right: none; }
.date-box button {
    width: 22px;
    padding-left: 2px;
    border: 1px solid #7b9fcf;
    border-left: none;
    background-color: #adc7e6;
}

/* --- Payment terms --- */
.terms { display: flex; align-items: center; margin-top: 7px; padding-left: 3px; }
.terms label { width: 80px; white-space: nowrap; }
.terms label[for="days"] { width: 90px; }
.terms label[for="due"] { width: 86px; }
.terms span { width: 50px; padding-left: 2px; }
.terms input[type="text"] { width: 88px; }
.terms #term { width: 112px; margin-right: 11px; }
.terms #days { width: 64px; }
.collapse {
    display: flex;
    align-items: center;
    justify-content: center;
    width: 50px;
    height: 8px;
    margin: 4px auto 0;
    border: 1px solid #7b9fcf;
    background-color: #adc7e6;
}

/* --- Detail grid --- */
.detail-bar { display: flex; justify-content: space-between; height: 27px; }
.detail-tabs { display: flex; align-items: flex-end; }
.detail-tabs .tab { padding: 0 13px; }
.detail-tabs .tab.active { padding: 0 10px; }
.currency { display: flex; align-items: center; height: 21px; }
.currency label { width: 55px; }
.currency label[for="rate"] { width: 45px; padding-left: 6px; }
.currency input[type="text"] { width: 59px; padding-left: 5px; }
.currency input.num[type="text"] { width: 80px; padding-right: 2px; }
.grid { border: 1px solid #7b9fcf; }
.grid table {
    width: 100%;
    table-layout: fixed;
    border-collapse: separate;
    border-spacing: 0;
    background-color: #fff;
}
.c1 { width: 100px; }
.c2 { width: 210px; }
.c3 { width: 200px; }
.c4, .c6 { width: 95px; }
.c5 { width: 120px; }
.c7 { width: 92px; }
.grid th {
    height: 20px;
    padding: 0;
    border-right: 1px solid #7b9fcf;
    border-bottom: 1px solid #7b9fcf;
    background-color: #adc7e6;
    font-weight: normal;
    white-space: nowrap;
}
.grid th:last-child { border-right: none; }
.grid th div { display: flex; align-items: center; }
.grid th span { flex: 1; }
.grid th svg { width: 10px; height: 10px; margin-right: 1px; }
.grid th .pinned { transform: rotate(-90deg); }
.grid tbody td {
    height: 20px;
    padding: 0 5px;
    border-right: 1px dotted #b0b0b0;
    border-bottom: 1px dotted #b0b0b0;
    white-space: nowrap;
    overflow: hidden;
}
.grid tbody td:first-child { border-right: 1px solid #808080; }
.grid tbody td:last-child { border-right: none; padding-right: 0; }
.grid tbody .num { padding: 0 3px; }
.grid tbody .mid { text-align: center; }
.grid tbody .cut td { height: 14px; border-bottom: none; }
.grid tfoot td {
    height: 17px;
    padding: 0;
    border-top: 1px solid #7b9fcf;
    background-color: #f0f0f0;
}
.grid tfoot .total { background-color: #d7d7d7; padding: 0 3px; border-right: 1px solid #7b9fcf; }
.grid tfoot .count { border-right-color: #808080; }
.scroll-x {
    display: flex;
    justify-content: space-between;
    height: 18px;
    border-top: 1px solid #7b9fcf;
    background-color: #d7d7d7;
}
.scroll-x button {
    display: flex;
    align-items: center;
    justify-content: center;
    width: 17px;
    background-color: #adc7e6;
}
.scroll-x .thumb { width: 451px; justify-content: flex-start; padding-left: 6px; }

/* --- Totals --- */
.summary { display: flex; margin-top: 9px; }
.actions { display: flex; flex-direction: column; gap: 4px; width: 118px; }
.actions button {
    height: 23px;
    border: 1px solid #7b9fcf;
    background-color: #adc7e6;
}
.actions button:disabled { background: none; color: #808080; }
.totals {
    display: grid;
    flex: 1;
    grid-template-columns: 160px 216px 160px 1fr;
    gap: 10px 0;
    margin: 0 0 0 96px;
}
.totals dt { font-weight: bold; }
.totals dt:nth-of-type(even) { padding-left: 22px; }
.totals dd { margin: 0; text-align: right; }
.dialog-foot {
    display: flex;
    justify-content: flex-end;
    align-items: flex-end;
    height: 23px;
    padding: 0 1px 1px 0;
    background-color: #adc7e6;
}

/* --- Orange notice --- */
.notice {
    position: absolute;
    right: 9px;
    bottom: 11px;
    width: 248px;
    border: 1px solid #f58218;
    background-color: #f0f0f0;
}
.notice header {
    display: flex;
    align-items: center;
    gap: 14px;
    height: 26px;
    padding: 0 12px 0 7px;
    background-color: #f58218;
    color: #fff;
}
.notice h4 { flex: 1; margin: 0 0 0 -9px; font-size: 11px; font-weight: normal; }
.notice p { margin: 0; padding: 6px 8px 7px; line-height: 13px; }
.notice a { color: #0000ee; }

.statusbar {
    height: 23px;
    padding-left: 4px;
    line-height: 23px;
    background-color: #adc7e6;
}

/* --- Taskbar --- */
.taskbar {
    display: flex;
    height: 40px;
    border-top: 1px solid #3a3a3a;
    background:
        linear-gradient(rgba(255, 255, 255, 0.35), transparent 2px),
        radial-gradient(ellipse 60px 14px at 965px 12px, #3a2010, transparent),
        radial-gradient(ellipse 80px 26px at 515px 6px, #a5651a, transparent),
        radial-gradient(ellipse 170px 24px at 400px 22px, #93591b, transparent),
        radial-gradient(ellipse 130px 16px at 250px 36px, #8a4f16, transparent),
        linear-gradient(90deg, #1a0d06, #070504 60px, #3a1f0e 240px, #5a3212 420px, #1a1410 580px, #1a1918 660px, #060504 740px, #1c1b1a 860px, #0a0705 960px, #060606 1200px);
}
.start { width: 54px; margin-right: 6px; padding: 1px 0 0 8px; }
.task {
    display: flex;
    align-items: center;
    justify-content: center;
    width: 58px;
    margin-right: 4px;
}
.task.open {
    border: 1px solid #a8a8a8;
    border-radius: 3px;
    background: linear-gradient(160deg, rgba(255, 255, 255, 0.5), rgba(255, 255, 255, 0.12) 60%);
}
.task.stacked { width: 53px; margin-right: 9px; box-shadow: 3px 0 0 -1px #3d3a37, 4px 0 0 -1px #8a8a8a; }
.task.warm { background: linear-gradient(160deg, rgba(255, 240, 220, 0.7), rgba(230, 180, 120, 0.45)); }
.task.bright { width: 50px; background: linear-gradient(160deg, #fff, rgba(255, 240, 225, 0.6)); }
.zalo-text { font-family: Roboto, sans-serif; font-weight: bold; fill: #0a62f2; }
.tray {
    display: flex;
    align-items: center;
    gap: 8px;
    margin-left: auto;
    color: #fff;
    font-family: "Open Sans", "Noto Sans", sans-serif;
    font-size: 12px;
}
.tray .net { margin-left: 4px; }
.tray time { width: 80px; text-align: center; line-height: 17px; }
.show-desktop {
    width: 14px;
    border: 1px solid #6a6a6a;
    background: linear-gradient(160deg, #555, #0a0a0a);
}
```
